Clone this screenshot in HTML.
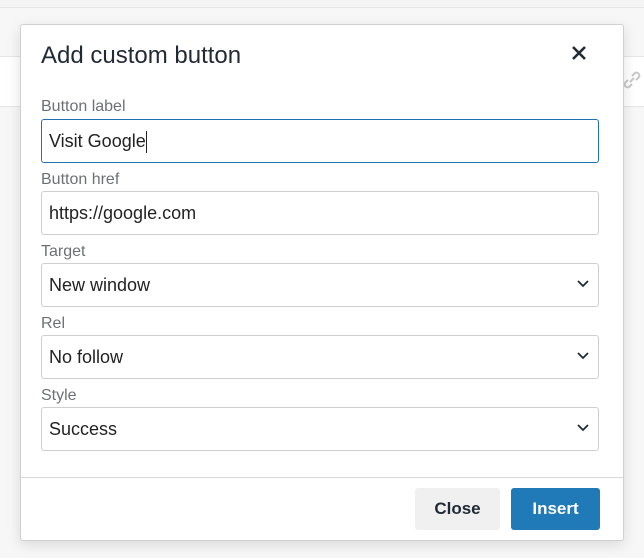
<!DOCTYPE html>
<html><head><style>
body{margin:0;width:644px;height:558px;background:#f7f7f7;font-family:"Liberation Sans",sans-serif;position:relative;overflow:hidden}
.bg1{position:absolute;left:0;right:0;top:0;height:7px;background:#f5f5f5;border-bottom:1px solid #e6e6e6}
.bg2{position:absolute;left:0;right:0;top:56px;height:49px;background:#fff;border-top:1px solid #e6e6e6;border-bottom:1px solid #e6e6e6}
.dlg{position:absolute;left:20px;top:24px;width:602px;height:515px;background:#fff;border:1px solid #d0d0d0;border-radius:3px;box-shadow:0 4px 14px rgba(0,0,0,.12)}
h1{position:absolute;left:20px;top:17px;margin:0;font-weight:normal;font-size:24px;color:#222b35}
.x{position:absolute;left:549px;top:19px}
.lbl{position:absolute;left:20px;font-size:16px;color:#6d7175}
.in{position:absolute;left:20px;width:549px;height:42px;border:1px solid #cfcfcf;border-radius:3px;font-size:18px;color:#222;line-height:42px;padding-left:7px;box-sizing:content-box}
.foc{border-color:#2071b1}
.ch{position:absolute;right:8px;top:15px}
.hr{position:absolute;left:0;right:0;top:452px;border-top:1px solid #d8d8d8}
.btn{position:absolute;top:463px;height:42px;border-radius:3px;font-size:17px;font-weight:bold;line-height:42px;text-align:center}
</style></head><body>
<div class="bg1"></div><div class="bg2"></div>
<svg style="position:absolute;left:620px;top:68px" width="24" height="24" viewBox="0 0 24 24" fill="none" stroke="#c8c8c8" stroke-width="2"><path d="M10 14l4-4M8 12l-3 3a3 3 0 004 4l3-3M16 12l3-3a3 3 0 00-4-4l-3 3"/></svg>
<div class="dlg">
<h1>Add custom button</h1>
<svg class="x" width="18" height="18" viewBox="0 0 18 18"><path d="M3 3L15 15M15 3L3 15" stroke="#222b35" stroke-width="2.6"/></svg>
<div class="lbl" style="top:73px">Button label</div>
<div class="in foc" style="top:94px">Visit Google<span style="display:inline-block;width:1px;height:22px;background:#222;vertical-align:middle"></span></div>
<div class="lbl" style="top:146px">Button href</div>
<div class="in" style="top:166px">https://google.com</div>
<div class="lbl" style="top:218px">Target</div>
<div class="in" style="top:238px">New window<svg class="ch" width="14" height="10" viewBox="0 0 14 10"><path d="M2 2l5 5 5-5" stroke="#222b35" stroke-width="1.8" fill="none"/></svg></div>
<div class="lbl" style="top:290px">Rel</div>
<div class="in" style="top:310px">No follow<svg class="ch" width="14" height="10" viewBox="0 0 14 10"><path d="M2 2l5 5 5-5" stroke="#222b35" stroke-width="1.8" fill="none"/></svg></div>
<div class="lbl" style="top:362px">Style</div>
<div class="in" style="top:382px">Success<svg class="ch" width="14" height="10" viewBox="0 0 14 10"><path d="M2 2l5 5 5-5" stroke="#222b35" stroke-width="1.8" fill="none"/></svg></div>
<div class="hr"></div>
<div class="btn" style="left:394px;width:85px;background:#f0f0f0;color:#222b35">Close</div>
<div class="btn" style="left:490px;width:89px;background:#207ab7;color:#fff">Insert</div>
</div>
</body></html>
